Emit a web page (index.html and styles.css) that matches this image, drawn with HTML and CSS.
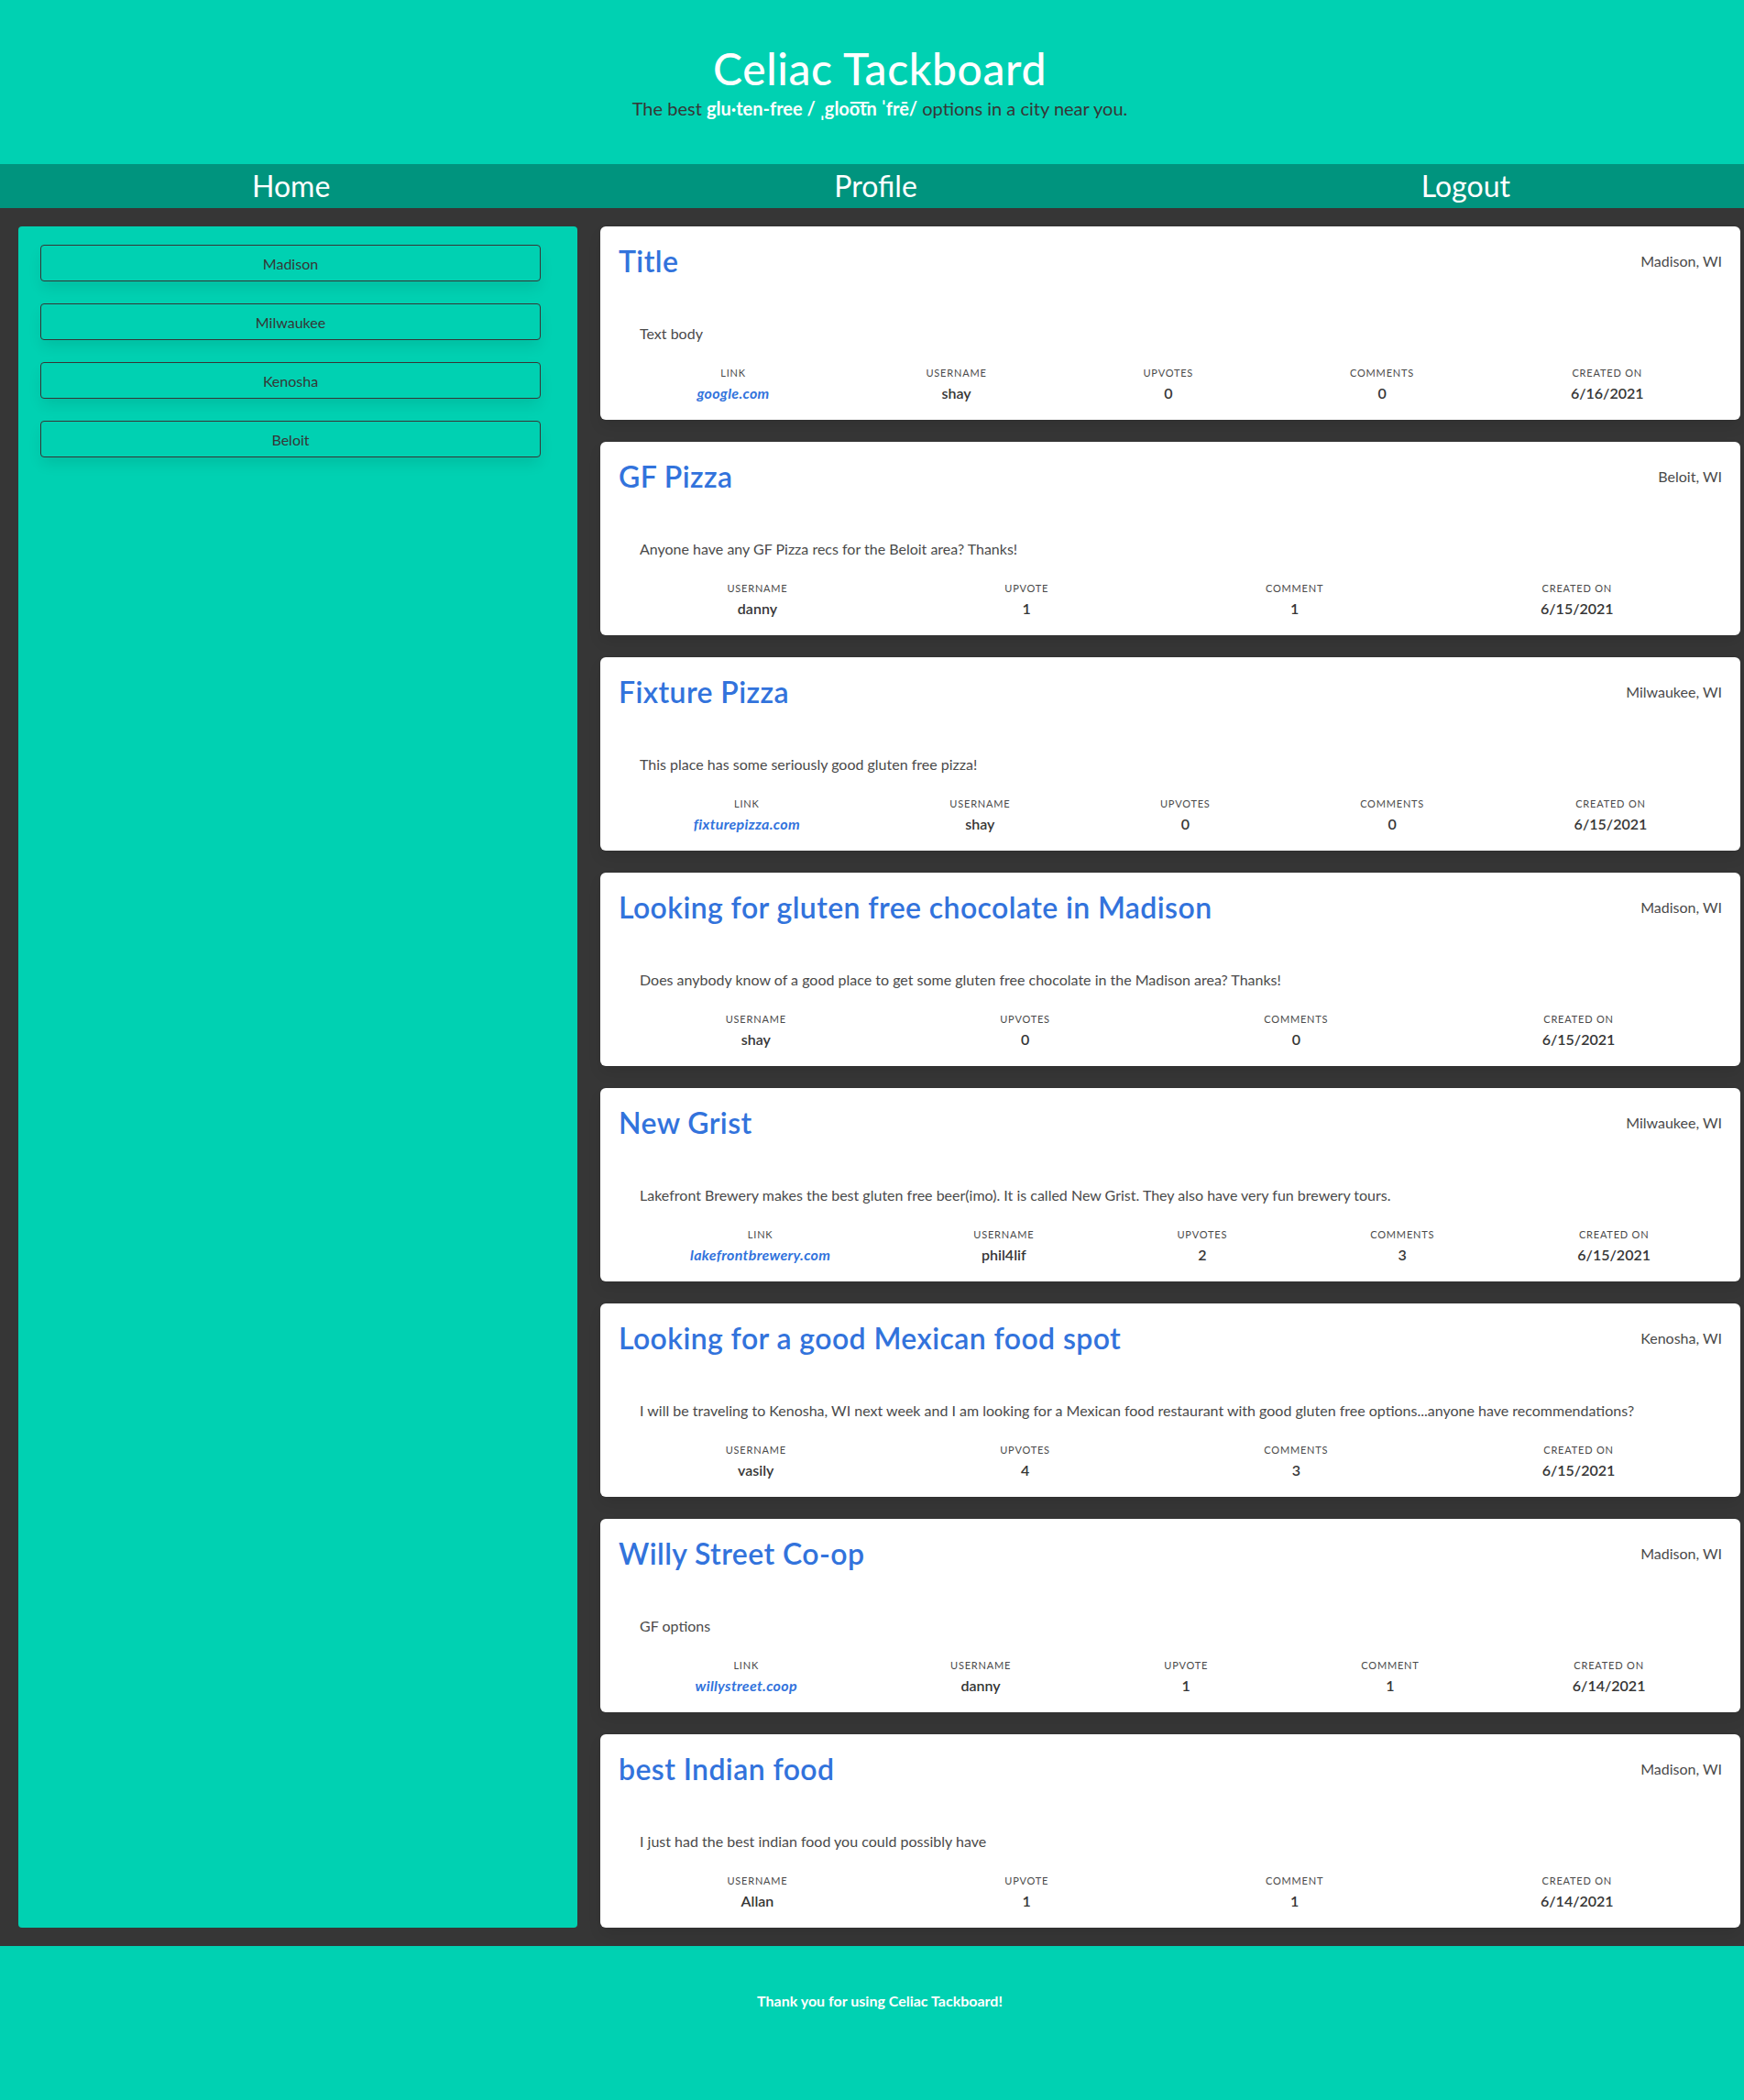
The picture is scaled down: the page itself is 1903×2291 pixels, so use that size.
FILE: index.html
```html
<!DOCTYPE html>
<html lang="en">
<head>
<meta charset="utf-8">
<title>Celiac Tackboard</title>
<link rel="stylesheet" href="styles.css">
</head>
<body>
<header class="hero">
  <h1 class="hero-title">Celiac Tackboard</h1>
  <p class="hero-subtitle">The best <strong>glu·ten-free / ˌglo͞otn ˈfrē/</strong> options in a city near you.</p>
</header>

<nav class="topnav">
  <ul class="topnav-list">
    <li class="topnav-item"><a href="#">Home</a></li>
    <li class="topnav-item"><a href="#">Profile</a></li>
    <li class="topnav-item"><a href="#">Logout</a></li>
  </ul>
</nav>

<main class="main">
  <aside class="sidebar">
    <button class="city-btn">Madison</button>
    <button class="city-btn">Milwaukee</button>
    <button class="city-btn">Kenosha</button>
    <button class="city-btn">Beloit</button>
  </aside>

  <section class="posts">
    <article class="post">
      <div class="post-head"><h2 class="post-title">Title</h2><span class="post-loc">Madison, WI</span></div>
      <p class="post-body">Text body</p>
      <div class="level">
        <div class="level-item"><p class="heading">Link</p><p class="value link">google.com</p></div>
        <div class="level-item"><p class="heading">Username</p><p class="value">shay</p></div>
        <div class="level-item"><p class="heading">Upvotes</p><p class="value">0</p></div>
        <div class="level-item"><p class="heading">Comments</p><p class="value">0</p></div>
        <div class="level-item"><p class="heading">Created On</p><p class="value">6/16/2021</p></div>
      </div>
    </article>

    <article class="post">
      <div class="post-head"><h2 class="post-title">GF Pizza</h2><span class="post-loc">Beloit, WI</span></div>
      <p class="post-body">Anyone have any GF Pizza recs for the Beloit area? Thanks!</p>
      <div class="level">
        <div class="level-item"><p class="heading">Username</p><p class="value">danny</p></div>
        <div class="level-item"><p class="heading">Upvote</p><p class="value">1</p></div>
        <div class="level-item"><p class="heading">Comment</p><p class="value">1</p></div>
        <div class="level-item"><p class="heading">Created On</p><p class="value">6/15/2021</p></div>
      </div>
    </article>

    <article class="post">
      <div class="post-head"><h2 class="post-title">Fixture Pizza</h2><span class="post-loc">Milwaukee, WI</span></div>
      <p class="post-body">This place has some seriously good gluten free pizza!</p>
      <div class="level">
        <div class="level-item"><p class="heading">Link</p><p class="value link">fixturepizza.com</p></div>
        <div class="level-item"><p class="heading">Username</p><p class="value">shay</p></div>
        <div class="level-item"><p class="heading">Upvotes</p><p class="value">0</p></div>
        <div class="level-item"><p class="heading">Comments</p><p class="value">0</p></div>
        <div class="level-item"><p class="heading">Created On</p><p class="value">6/15/2021</p></div>
      </div>
    </article>

    <article class="post">
      <div class="post-head"><h2 class="post-title">Looking for gluten free chocolate in Madison</h2><span class="post-loc">Madison, WI</span></div>
      <p class="post-body">Does anybody know of a good place to get some gluten free chocolate in the Madison area? Thanks!</p>
      <div class="level">
        <div class="level-item"><p class="heading">Username</p><p class="value">shay</p></div>
        <div class="level-item"><p class="heading">Upvotes</p><p class="value">0</p></div>
        <div class="level-item"><p class="heading">Comments</p><p class="value">0</p></div>
        <div class="level-item"><p class="heading">Created On</p><p class="value">6/15/2021</p></div>
      </div>
    </article>

    <article class="post">
      <div class="post-head"><h2 class="post-title">New Grist</h2><span class="post-loc">Milwaukee, WI</span></div>
      <p class="post-body">Lakefront Brewery makes the best gluten free beer(imo). It is called New Grist. They also have very fun brewery tours.</p>
      <div class="level">
        <div class="level-item"><p class="heading">Link</p><p class="value link">lakefrontbrewery.com</p></div>
        <div class="level-item"><p class="heading">Username</p><p class="value">phil4lif</p></div>
        <div class="level-item"><p class="heading">Upvotes</p><p class="value">2</p></div>
        <div class="level-item"><p class="heading">Comments</p><p class="value">3</p></div>
        <div class="level-item"><p class="heading">Created On</p><p class="value">6/15/2021</p></div>
      </div>
    </article>

    <article class="post">
      <div class="post-head"><h2 class="post-title">Looking for a good Mexican food spot</h2><span class="post-loc">Kenosha, WI</span></div>
      <p class="post-body">I will be traveling to Kenosha, WI next week and I am looking for a Mexican food restaurant with good gluten free options...anyone have recommendations?</p>
      <div class="level">
        <div class="level-item"><p class="heading">Username</p><p class="value">vasily</p></div>
        <div class="level-item"><p class="heading">Upvotes</p><p class="value">4</p></div>
        <div class="level-item"><p class="heading">Comments</p><p class="value">3</p></div>
        <div class="level-item"><p class="heading">Created On</p><p class="value">6/15/2021</p></div>
      </div>
    </article>

    <article class="post">
      <div class="post-head"><h2 class="post-title">Willy Street Co-op</h2><span class="post-loc">Madison, WI</span></div>
      <p class="post-body">GF options</p>
      <div class="level">
        <div class="level-item"><p class="heading">Link</p><p class="value link">willystreet.coop</p></div>
        <div class="level-item"><p class="heading">Username</p><p class="value">danny</p></div>
        <div class="level-item"><p class="heading">Upvote</p><p class="value">1</p></div>
        <div class="level-item"><p class="heading">Comment</p><p class="value">1</p></div>
        <div class="level-item"><p class="heading">Created On</p><p class="value">6/14/2021</p></div>
      </div>
    </article>

    <article class="post">
      <div class="post-head"><h2 class="post-title">best Indian food</h2><span class="post-loc">Madison, WI</span></div>
      <p class="post-body">I just had the best indian food you could possibly have</p>
      <div class="level">
        <div class="level-item"><p class="heading">Username</p><p class="value">Allan</p></div>
        <div class="level-item"><p class="heading">Upvote</p><p class="value">1</p></div>
        <div class="level-item"><p class="heading">Comment</p><p class="value">1</p></div>
        <div class="level-item"><p class="heading">Created On</p><p class="value">6/14/2021</p></div>
      </div>
    </article>
  </section>
</main>

<footer class="footer">
  <p class="footer-text">Thank you for using Celiac Tackboard!</p>
</footer>
</body>
</html>
```

FILE: styles.css
```css
* { box-sizing: border-box; }

html, body {
  margin: 0;
  padding: 0;
}

html {
  background: #00d1b2;
}

body {
  font-family: "Lato", "Open Sans", "Liberation Sans", sans-serif;
  font-size: 16px;
  line-height: 1.5;
  color: #4a4a4a;
  background: #363636;
  overflow-x: hidden;
}

p, h1, h2, ul { margin: 0; padding: 0; }

/* Header */
.hero {
  background: #00d1b2;
  padding: 48px 24px 48px 41px;
  text-align: center;
}

.hero-title {
  font-size: 48px;
  line-height: 54px;
  font-weight: 500;
  letter-spacing: 0.6px;
  color: #ffffff;
  margin-bottom: 4px;
}

.hero-subtitle {
  font-size: 20px;
  line-height: 25px;
  color: #363636;
}

.hero-subtitle strong {
  color: #ffffff;
  font-weight: 700;
}

/* Nav */
.topnav {
  background: #00947e;
  overflow: hidden;
}

.topnav-list {
  list-style: none;
  display: flex;
  width: 1923px;
}

.topnav-item {
  flex: 1 1 auto;
  text-align: center;
}

.topnav-item a {
  display: inline-block;
  font-size: 32px;
  line-height: 48px;
  color: #ffffff;
  text-decoration: none;
}

/* Main */
.main {
  display: flex;
  align-items: stretch;
  gap: 25px;
  padding: 20px 0 20px 20px;
}

.sidebar {
  flex: 0 0 610px;
  background: #00d1b2;
  border-radius: 4px;
  padding: 20px 40px 20px 24px;
  display: flex;
  flex-direction: column;
  align-items: stretch;
}

.city-btn {
  height: 40px;
  margin-bottom: 24px;
  background: #00d1b2;
  border: 1px solid #363636;
  border-radius: 4px;
  font-family: inherit;
  font-size: 16px;
  color: #363636;
  cursor: pointer;
  box-shadow: 0 8px 16px -2px rgba(10, 10, 10, 0.1);
}

.posts {
  flex: 0 0 1244px;
  display: flex;
  flex-direction: column;
  gap: 24px;
}

.post {
  background: #ffffff;
  border-radius: 6px;
  padding: 20px;
  box-shadow: 0 8px 16px -2px rgba(10, 10, 10, 0.1), 0 0 0 1px rgba(10, 10, 10, 0.02);
}

.post-head {
  display: flex;
  justify-content: space-between;
  align-items: center;
}

.post-title {
  font-size: 32px;
  line-height: 36px;
  font-weight: 600;
  letter-spacing: 0.4px;
  color: #3273dc;
}

.post-loc {
  font-size: 16px;
  line-height: 24px;
  color: #4a4a4a;
}

.post-body {
  margin: 49px 0 0 23px;
  line-height: 24px;
}

.level {
  display: flex;
  margin-top: 23px;
}

.level-item {
  flex: 1 1 auto;
  text-align: center;
}

.heading {
  font-size: 11px;
  line-height: 16px;
  letter-spacing: 0.8px;
  text-transform: uppercase;
  margin-bottom: 5px;
}

.value {
  font-size: 16px;
  line-height: 18px;
  font-weight: 600;
  color: #363636;
}

.value.link {
  color: #3273dc;
  font-style: italic;
  font-weight: 700;
  letter-spacing: 0.3px;
}

/* Footer */
.footer {
  background: #00d1b2;
  padding: 48px 24px 96px 41px;
  text-align: center;
}

.footer-text {
  font-weight: 700;
  line-height: 24px;
  color: #ffffff;
}
```
